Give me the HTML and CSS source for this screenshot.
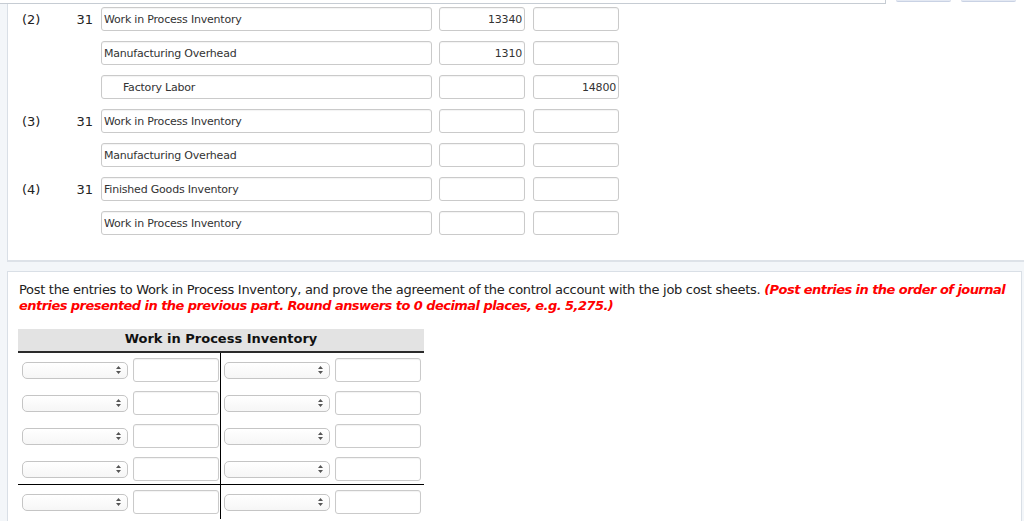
FILE: index.html
```html
<!doctype html>
<html lang="en">
<head>
    <meta charset="UTF-8">
    <title>Work in Process Inventory</title>
    <link rel="stylesheet" href="styles.css">
</head>
<body>
<div class="topbar">
    <div class="topbar-line"></div>
    <div class="tab"></div>
    <div class="tab"></div>
</div>

<div class="panel panel-journal">
    <div class="jrow">
        <span class="num">(2)</span>
        <span class="date">31</span>
        <input class="acct" type="text" value="Work in Process Inventory">
        <input class="amt" type="text" value="13340">
        <input class="amt" type="text" value="">
    </div>
    <div class="jrow">
        <span class="num"></span>
        <span class="date"></span>
        <input class="acct" type="text" value="Manufacturing Overhead">
        <input class="amt" type="text" value="1310">
        <input class="amt" type="text" value="">
    </div>
    <div class="jrow">
        <span class="num"></span>
        <span class="date"></span>
        <input class="acct credit" type="text" value="Factory Labor">
        <input class="amt" type="text" value="">
        <input class="amt" type="text" value="14800">
    </div>
    <div class="jrow">
        <span class="num">(3)</span>
        <span class="date">31</span>
        <input class="acct" type="text" value="Work in Process Inventory">
        <input class="amt" type="text" value="">
        <input class="amt" type="text" value="">
    </div>
    <div class="jrow">
        <span class="num"></span>
        <span class="date"></span>
        <input class="acct" type="text" value="Manufacturing Overhead">
        <input class="amt" type="text" value="">
        <input class="amt" type="text" value="">
    </div>
    <div class="jrow">
        <span class="num">(4)</span>
        <span class="date">31</span>
        <input class="acct" type="text" value="Finished Goods Inventory">
        <input class="amt" type="text" value="">
        <input class="amt" type="text" value="">
    </div>
    <div class="jrow">
        <span class="num"></span>
        <span class="date"></span>
        <input class="acct" type="text" value="Work in Process Inventory">
        <input class="amt" type="text" value="">
        <input class="amt" type="text" value="">
    </div>
</div>

<div class="panel panel-post">
    <p class="question">Post the entries to Work in Process Inventory, and prove the agreement of the control account with the job cost sheets. <em class="note">(Post entries in the order of journal entries presented in the previous part. Round answers to 0 decimal places, e.g. 5,275.)</em></p>

    <div class="tacct">
        <div class="tacct-head">Work in Process Inventory</div>
        <div class="trow first">
            <div class="tcell left"><span class="sel"><svg width="5" height="8" viewBox="0 0 5 8"><path d="M2.5 0 L5 3 L0 3 Z M0 5 L5 5 L2.5 8 Z" fill="#555"/></svg></span><input class="tamt" type="text"></div>
            <div class="tcell"><span class="sel"><svg width="5" height="8" viewBox="0 0 5 8"><path d="M2.5 0 L5 3 L0 3 Z M0 5 L5 5 L2.5 8 Z" fill="#555"/></svg></span><input class="tamt" type="text"></div>
        </div>
        <div class="trow">
            <div class="tcell left"><span class="sel"><svg width="5" height="8" viewBox="0 0 5 8"><path d="M2.5 0 L5 3 L0 3 Z M0 5 L5 5 L2.5 8 Z" fill="#555"/></svg></span><input class="tamt" type="text"></div>
            <div class="tcell"><span class="sel"><svg width="5" height="8" viewBox="0 0 5 8"><path d="M2.5 0 L5 3 L0 3 Z M0 5 L5 5 L2.5 8 Z" fill="#555"/></svg></span><input class="tamt" type="text"></div>
        </div>
        <div class="trow">
            <div class="tcell left"><span class="sel"><svg width="5" height="8" viewBox="0 0 5 8"><path d="M2.5 0 L5 3 L0 3 Z M0 5 L5 5 L2.5 8 Z" fill="#555"/></svg></span><input class="tamt" type="text"></div>
            <div class="tcell"><span class="sel"><svg width="5" height="8" viewBox="0 0 5 8"><path d="M2.5 0 L5 3 L0 3 Z M0 5 L5 5 L2.5 8 Z" fill="#555"/></svg></span><input class="tamt" type="text"></div>
        </div>
        <div class="trow before-total">
            <div class="tcell left"><span class="sel"><svg width="5" height="8" viewBox="0 0 5 8"><path d="M2.5 0 L5 3 L0 3 Z M0 5 L5 5 L2.5 8 Z" fill="#555"/></svg></span><input class="tamt" type="text"></div>
            <div class="tcell"><span class="sel"><svg width="5" height="8" viewBox="0 0 5 8"><path d="M2.5 0 L5 3 L0 3 Z M0 5 L5 5 L2.5 8 Z" fill="#555"/></svg></span><input class="tamt" type="text"></div>
        </div>
        <div class="trow total">
            <div class="tcell left"><span class="sel"><svg width="5" height="8" viewBox="0 0 5 8"><path d="M2.5 0 L5 3 L0 3 Z M0 5 L5 5 L2.5 8 Z" fill="#555"/></svg></span><input class="tamt" type="text"></div>
            <div class="tcell"><span class="sel"><svg width="5" height="8" viewBox="0 0 5 8"><path d="M2.5 0 L5 3 L0 3 Z M0 5 L5 5 L2.5 8 Z" fill="#555"/></svg></span><input class="tamt" type="text"></div>
        </div>
    </div>
</div>
</body>
</html>
```

FILE: styles.css
```css
body {
    margin: 0;
    background-color: #f3f6f9;
    font-family: 'DejaVu Sans', Verdana, sans-serif;
    font-size: 13px;
    color: #222;
}

/* strip left over from the part above */
.topbar {
    display: flex;
    height: 4px;
    background: #fff;
}

.topbar-line {
    width: 885px;
    height: 3px;
    border-bottom: 1px solid #c6ccd3;
    border-right: 1px solid #c6ccd3;
}

.tab {
    width: 55px;
    height: 1px;
    margin-left: 10px;
    border-bottom: 1px solid #c9d2e4;
    border-radius: 0 0 4px 4px;
    background: #e4e9f3;
}

.tab:first-of-type {
    margin-left: 14px;
}

.panel {
    margin-left: 7px;
    width: 1013px;
    background: #fff;
    border: 1px solid #d9dfe6;
}

.panel-journal {
    border-top: none;
    border-bottom: 2px solid #dde2e8;
    padding: 3px 0 25px 14px;
}

.panel-post {
    margin-top: 9px;
    padding: 10px 0 10px 10px;
    width: 1003px;
    height: 260px;
}

/* journal rows */
.jrow {
    display: flex;
    align-items: center;
    height: 24px;
    margin-bottom: 10px;
}

.jrow:last-child {
    margin-bottom: 0;
}

.num {
    width: 48px;
}

.date {
    width: 23px;
    text-align: right;
    margin-right: 8px;
}

input {
    box-sizing: border-box;
    height: 24px;
    border: 1px solid #cacaca;
    border-radius: 3px;
    background: #fff;
    font-family: 'DejaVu Sans', Verdana, sans-serif;
    font-size: 11px;
    letter-spacing: -0.2px;
    color: #333;
    box-shadow: inset 0 1px 1px rgba(0, 0, 0, 0.05);
    outline: none;
}

.acct {
    width: 331px;
    padding: 0 2px;
    margin-right: 7px;
}

.acct.credit {
    padding-left: 21px;
}

.amt {
    width: 86px;
    padding: 0 2px;
    margin-right: 8px;
    text-align: right;
}

/* instructions */
.question {
    margin: 0 0 15px 1px;
    line-height: 16px;
    width: 1002px;
    letter-spacing: -0.3px;
}

.note {
    color: #f00;
    font-weight: bold;
    letter-spacing: -0.55px;
}

/* T account */
.tacct {
    width: 406px;
}

.tacct-head {
    height: 22px;
    line-height: 20px;
    background: #e3e3e3;
    border-bottom: 2px solid #2b2b2b;
    text-align: center;
    font-weight: bold;
    color: #111;
}

.trow {
    display: grid;
    grid-template-columns: 203px 203px;
}

.tcell {
    display: flex;
    align-items: center;
    gap: 5px;
    padding: 4px 0 5px 3px;
}

.tcell.left {
    border-right: 1px solid #000;
    padding-left: 4px;
}

.trow.first .tcell {
    padding-top: 5px;
}

.trow.before-total .tcell {
    padding-bottom: 3px;
}

.trow.total {
    border-top: 1px solid #000;
}

.trow.total .tcell {
    padding-top: 5px;
}

.sel {
    box-sizing: border-box;
    display: flex;
    align-items: center;
    justify-content: flex-end;
    width: 106px;
    height: 17px;
    padding-right: 6px;
    border: 1px solid #c5c5c5;
    border-radius: 5px;
    background: linear-gradient(#fff, #f6f6f6);
}

.tamt {
    width: 86px;
}
```
